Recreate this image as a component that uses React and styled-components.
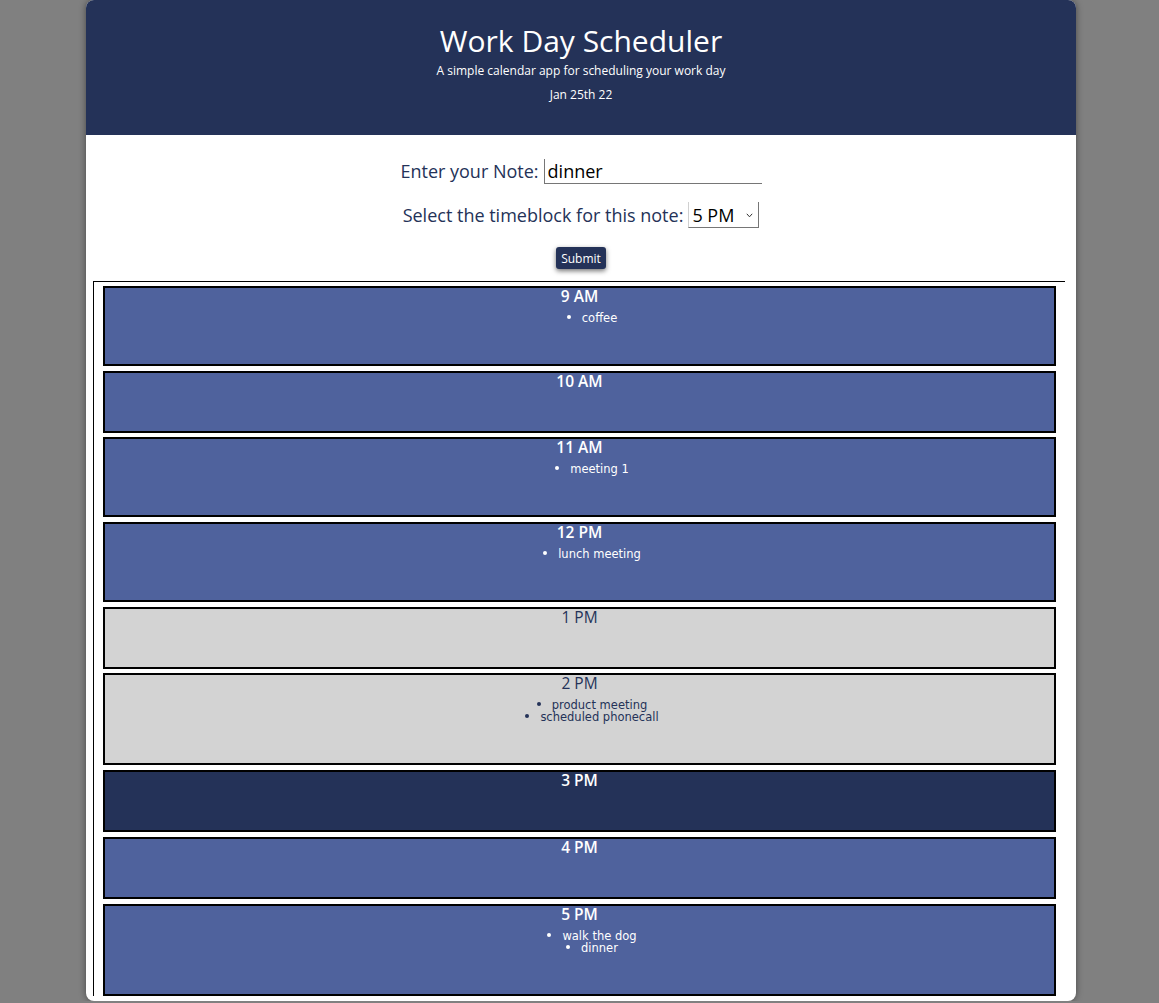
import React from "react";
import styled, { createGlobalStyle } from "styled-components";

const Global = createGlobalStyle`
  html, body { margin: 0; padding: 0; background: #808080; }
  body { font-family: "Open Sans", "Noto Sans", sans-serif; }
`;

const Page = styled.div`
  padding: 0 83px 0 86px;
`;

const Card = styled.div`
  width: 990px;
  height: 1001px;
  background: #ffffff;
  border-radius: 8px;
  overflow: hidden;
  box-shadow: 0 0 7px rgba(0, 0, 0, 0.45);
`;

const Header = styled.header`
  background: #243258;
  height: 135px;
  box-sizing: border-box;
  padding-top: 20px;
  text-align: center;
  color: #ffffff;
`;

const Title = styled.h1`
  margin: 0;
  font-size: 30px;
  font-weight: 400;
  line-height: 41px;
`;

const Sub = styled.p`
  margin: 2px 0 0;
  font-size: 12px;
  line-height: 16px;
`;

const DateLine = styled.p`
  margin: 8px 0 0;
  font-size: 12px;
  line-height: 16px;
`;

const Form = styled.form`
  display: flex;
  flex-direction: column;
  align-items: center;
  padding-top: 23px;
  gap: 18px;
  color: #243258;
`;

const Row = styled.div`
  display: flex;
  align-items: center;
  gap: 5px;
  font-size: 18px;
  height: 26px;
`;

const NoteInput = styled.input`
  width: 218px;
  height: 25px;
  box-sizing: border-box;
  border: none;
  border-left: 1px solid #767676;
  border-bottom: 1px solid #767676;
  font-family: "Open Sans", sans-serif;
  font-size: 18px;
  padding: 0 3px;
  color: #000;
  outline: none;
  background: #fff;
`;

const SelectWrap = styled.div`
  position: relative;
  display: flex;
`;

const Select = styled.select`
  appearance: none;
  width: 71px;
  height: 26px;
  box-sizing: border-box;
  font-family: "Open Sans", sans-serif;
  font-size: 18px;
  border: none;
  border-left: 1px solid #d0d0d0;
  border-right: 1px solid #767676;
  border-bottom: 1px solid #767676;
  border-radius: 0;
  background: #fff;
  color: #000;
  padding: 0 0 0 3px;
  outline: none;
`;

const Chevron = styled.svg`
  position: absolute;
  right: 6px;
  top: 11px;
  width: 7px;
  height: 5px;
  pointer-events: none;
`;

const SubmitButton = styled.button`
  margin-top: 1px;
  width: 50px;
  height: 22px;
  background: #243258;
  color: #fff;
  border: none;
  border-radius: 3px;
  font-family: "Open Sans", sans-serif;
  font-size: 12px;
  padding: 0;
  box-shadow: 0 2px 5px rgba(0, 0, 0, 0.55);
`;

const Container = styled.section`
  margin: 12px 0 0 7px;
  width: 972px;
  box-sizing: border-box;
  border-top: 1px solid #000;
  border-left: 1px solid #000;
  padding: 4px 9px 0 9px;
  display: flex;
  flex-direction: column;
  gap: 4.7px;
`;

const palette = {
  past: { bg: "#4f629d", fg: "#ffffff", weight: 600 },
  present: { bg: "#243258", fg: "#ffffff", weight: 600 },
  gray: { bg: "#d3d3d3", fg: "#243258", weight: 400 },
};

const Block = styled.div`
  background: ${(p) => palette[p.$kind].bg};
  color: ${(p) => palette[p.$kind].fg};
  border: 2px solid #000;
  padding-bottom: 40px;
`;

const Hour = styled.h3`
  margin: 0;
  padding-bottom: 2px;
  text-align: center;
  font-size: 15.5px;
  line-height: 16px;
  font-weight: ${(p) => palette[p.$kind].weight};
`;

const Notes = styled.ul`
  margin: 6px 0 0;
  padding-left: 40px;
  list-style: none;
  font-family: "Comic Sans MS", "DejaVu Sans", sans-serif;
  font-size: 11.5px;
  line-height: 12px;
`;

const Note = styled.li`
  text-align: center;
`;

const NoteText = styled.span`
  position: relative;
  &::before {
    content: "";
    position: absolute;
    left: -15px;
    top: 4px;
    width: 4px;
    height: 4px;
    border-radius: 50%;
    background: currentColor;
  }
`;

const blocks = [
  { hour: "9 AM", kind: "past", notes: ["coffee"] },
  { hour: "10 AM", kind: "past", notes: [] },
  { hour: "11 AM", kind: "past", notes: ["meeting 1"] },
  { hour: "12 PM", kind: "past", notes: ["lunch meeting"] },
  { hour: "1 PM", kind: "gray", notes: [] },
  { hour: "2 PM", kind: "gray", notes: ["product meeting", "scheduled phonecall"] },
  { hour: "3 PM", kind: "present", notes: [] },
  { hour: "4 PM", kind: "past", notes: [] },
  { hour: "5 PM", kind: "past", notes: ["walk the dog", "dinner"] },
];

export default function App() {
  return (
    <>
      <Global />
      <Page>
        <Card>
          <Header>
            <Title>Work Day Scheduler</Title>
            <Sub>A simple calendar app for scheduling your work day</Sub>
            <DateLine>Jan 25th 22</DateLine>
          </Header>
          <Form onSubmit={(e) => e.preventDefault()}>
            <Row>
              <label>Enter your Note:</label>
              <NoteInput defaultValue="dinner" />
            </Row>
            <Row>
              <label>Select the timeblock for this note:</label>
              <SelectWrap>
                <Select defaultValue="5 PM">
                  {blocks.map((b) => (
                    <option key={b.hour}>{b.hour}</option>
                  ))}
                </Select>
                <Chevron viewBox="0 0 7 5">
                  <path d="M0.8 0.8 L3.5 3.8 L6.2 0.8" fill="none" stroke="#333" strokeWidth="1" />
                </Chevron>
              </SelectWrap>
            </Row>
            <SubmitButton type="submit">Submit</SubmitButton>
          </Form>
          <Container>
            {blocks.map((b) => (
              <Block key={b.hour} $kind={b.kind}>
                <Hour $kind={b.kind}>{b.hour}</Hour>
                {b.notes.length > 0 && (
                  <Notes>
                    {b.notes.map((n) => (
                      <Note key={n}>
                        <NoteText>{n}</NoteText>
                      </Note>
                    ))}
                  </Notes>
                )}
              </Block>
            ))}
          </Container>
        </Card>
      </Page>
    </>
  );
}
